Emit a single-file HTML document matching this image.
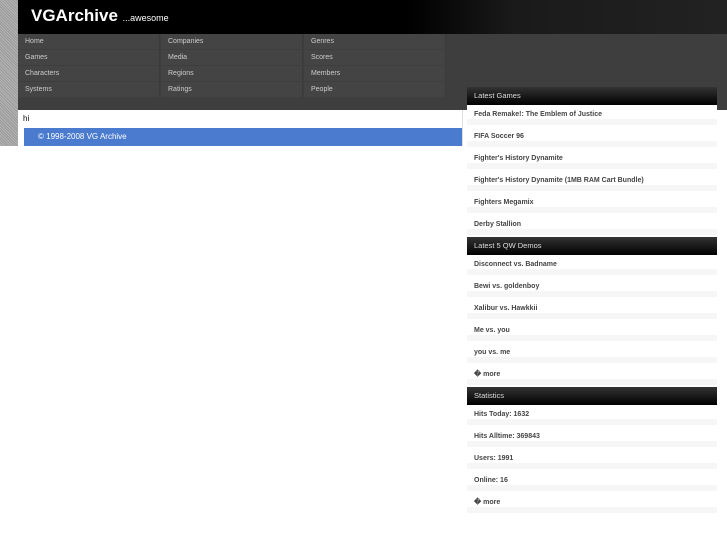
<html><head><style>
body{margin:0;width:727px;height:545px;background:#fff;font-family:"Liberation Sans",sans-serif;position:relative;overflow:hidden}
.strip{position:absolute;left:0;top:0;width:18px;height:146px;background:repeating-linear-gradient(45deg,#999 0 1px,#b5b5b5 1px 2px)}
.hdr{position:absolute;left:18px;top:0;width:709px;height:34px;background:linear-gradient(90deg,#000 55%,#1a1a1a 70%,#222 100%)}
.hdr b{position:absolute;left:13px;top:6px;color:#fff;font-size:17px}
.hdr span{font-size:9px;font-weight:normal}
.navbg{position:absolute;left:18px;top:34px;width:709px;height:76px;background:#3e3e3e}
.nav a{position:absolute;width:142px;height:15px;background:#444;border-right:1px solid #3a3a3a;color:#ccc;font-size:7px;line-height:15px;padding-left:7px;box-sizing:border-box}
.content{position:absolute;left:18px;top:110px;width:444px;height:36px;background:#fff;border-right:1px solid #ddd}
.content .hi{position:absolute;left:5px;top:4px;font-size:8px}
.foot{position:absolute;left:24px;top:128px;width:438px;height:18px;background:#4a7bcf;color:#fff;font-size:8px;line-height:18px;padding-left:14px;box-sizing:border-box}
.side{position:absolute;left:467px;width:250px}
.sh{height:18px;background:linear-gradient(#333,#000);color:#ddd;font-size:7.5px;line-height:18px;padding-left:7px}
.it{height:22px;background:linear-gradient(#fff 0 14px,#f6f6f6 14px 20px,#fff 20px);font-size:7px;font-weight:bold;color:#444;line-height:19px;padding-left:7px}
</style></head><body>
<div class="strip"></div>
<div class="hdr"><b>VGArchive <span>...awesome</span></b></div>
<div class="navbg"></div>
<div class="nav">
<a style="left:18px;top:34px">Home</a><a style="left:161px;top:34px">Companies</a><a style="left:304px;top:34px">Genres</a>
<a style="left:18px;top:50px">Games</a><a style="left:161px;top:50px">Media</a><a style="left:304px;top:50px">Scores</a>
<a style="left:18px;top:66px">Characters</a><a style="left:161px;top:66px">Regions</a><a style="left:304px;top:66px">Members</a>
<a style="left:18px;top:82px">Systems</a><a style="left:161px;top:82px">Ratings</a><a style="left:304px;top:82px">People</a>
</div>
<div class="content"><div class="hi">hi</div></div>
<div class="foot">© 1998-2008 VG Archive</div>
<div class="side" style="top:87px">
<div class="sh">Latest Games</div>
<div class="it">Feda Remake!: The Emblem of Justice</div>
<div class="it">FIFA Soccer 96</div>
<div class="it">Fighter's History Dynamite</div>
<div class="it">Fighter's History Dynamite (1MB RAM Cart Bundle)</div>
<div class="it">Fighters Megamix</div>
<div class="it">Derby Stallion</div>
<div class="sh">Latest 5 QW Demos</div>
<div class="it">Disconnect vs. Badname</div>
<div class="it">Bewi vs. goldenboy</div>
<div class="it">Xalibur vs. Hawkkii</div>
<div class="it">Me vs. you</div>
<div class="it">you vs. me</div>
<div class="it">� more</div>
<div class="sh">Statistics</div>
<div class="it">Hits Today: 1632</div>
<div class="it">Hits Alltime: 369843</div>
<div class="it">Users: 1991</div>
<div class="it">Online: 16</div>
<div class="it">� more</div>
</div>
</body></html>
